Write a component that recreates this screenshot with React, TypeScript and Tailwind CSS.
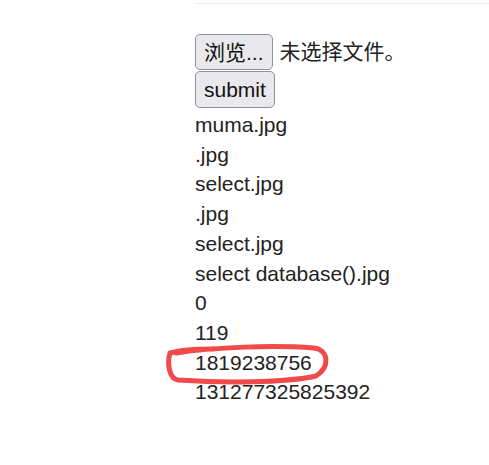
const lines = [
  "muma.jpg",
  ".jpg",
  "select.jpg",
  ".jpg",
  "select.jpg",
  "select database().jpg",
  "0",
  "119",
  "1819238756",
  "131277325825392",
];

const App = () => {
  return (
    <div className="relative w-[489px] h-[465px] bg-white text-[#222] font-['Liberation_Sans','Noto_Sans_CJK_SC',sans-serif] text-[21px]">
      <div className="ml-[195px] pt-[3px]">
        <div className="h-px bg-[#ebebeb]" />
        <div className="mt-[30px] flex items-center gap-[7px]">
          <button className="h-[36px] px-[8px] rounded-[5px] border border-[#8f8f9d] bg-[#e9e9ed] text-[21px] leading-none text-[#111]">
            浏览...
          </button>
          <span>未选择文件。</span>
        </div>
        <button className="mt-px h-[37px] px-[8px] rounded-[5px] border border-[#8f8f9d] bg-[#e9e9ed] text-[21px] leading-none text-[#111]">
          submit
        </button>
        <div className="leading-[29.7px] mt-[2px]">
          {lines.map((l, i) => (
            <div key={i}>{l}</div>
          ))}
        </div>
      </div>
      <svg className="absolute left-[164px] top-[343px]" width="172" height="44" viewBox="0 0 172 44">
        <path
          d="M12 10 C 50 4, 110 2, 150 5 C 165 7, 166 24, 152 33 C 120 40, 60 40, 14 37 C 5 36, 3 20, 6 10 C 20 6, 40 6, 50 6"
          fill="none"
          stroke="#f24a4a"
          strokeWidth="5"
          strokeLinecap="round"
        />
      </svg>
    </div>
  );
};

export default App;
